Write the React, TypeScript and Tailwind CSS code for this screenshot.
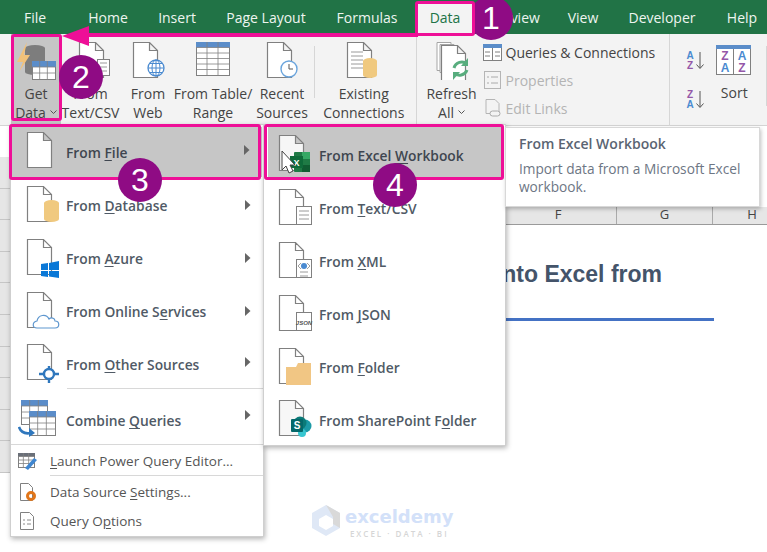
import React from "react";

const G = "#808080";
const Doc = ({ x = 0, y = 0, fill = "#fff" }: { x?: number; y?: number; fill?: string }) => (
  <path d={`M${x + 0.5} ${y + 0.5}h16l8 8v27h-24z M${x + 16.5} ${y + 0.5}v8h8`} fill={fill} stroke={G} strokeWidth="1.2" />
);
const Ic = ({ w = 40, h = 40, children }: { w?: number; h?: number; children: React.ReactNode }) => (
  <svg width={w} height={h} viewBox={`0 0 ${w} ${h}`} className="shrink-0 block">{children}</svg>
);
const Can = ({ x, y, w, h, c }: { x: number; y: number; w: number; h: number; c: string }) => (
  <g fill={c}>
    <ellipse cx={x + w / 2} cy={y + 3} rx={w / 2} ry={3} />
    <rect x={x} y={y + 3} width={w} height={h - 6} />
    <ellipse cx={x + w / 2} cy={y + h - 3} rx={w / 2} ry={3} />
  </g>
);
const Grid = ({ x, y, w, h, cols, rows, head = "#5b8dc9" }: { x: number; y: number; w: number; h: number; cols: number; rows: number; head?: string }) => (
  <g>
    <rect x={x + 0.5} y={y + 0.5} width={w} height={h} fill="#fff" stroke={G} />
    <rect x={x} y={y} width={w + 1} height={h / (rows + 1)} fill={head} />
    {Array.from({ length: cols - 1 }).map((_, i) => (
      <line key={i} x1={x + ((i + 1) * w) / cols} x2={x + ((i + 1) * w) / cols} y1={y} y2={y + h} stroke={G} strokeWidth="0.8" />
    ))}
    {Array.from({ length: rows }).map((_, i) => (
      <line key={i} x1={x} x2={x + w} y1={y + ((i + 1) * h) / (rows + 1)} y2={y + ((i + 1) * h) / (rows + 1)} stroke={G} strokeWidth="0.8" />
    ))}
  </g>
);
const Lines = ({ x, y, w, n = 3 }: { x: number; y: number; w: number; n?: number }) => (
  <g stroke="#9a9a9a" strokeWidth="1">
    {Array.from({ length: n }).map((_, i) => (
      <line key={i} x1={x} x2={x + w} y1={y + i * 4} y2={y + i * 4} />
    ))}
  </g>
);

const FileIcon = () => <Ic><Doc x={1} y={1} /></Ic>;
const DbIcon = () => <Ic><Doc x={1} y={1} /><Can x={18} y={15} w={15} h={22} c="#f0c97f" /></Ic>;
const AzureIcon = () => (
  <Ic><Doc x={1} y={1} />
    <path d="M15 26l7-1v7h-7zM23 25l10-2v9H23zM15 33h7v6l-7-1zM23 33h10v7l-10-1.5z" fill="#0a78d7" />
  </Ic>
);
const CloudIcon = () => (
  <Ic><Doc x={1} y={1} />
    <path d="M11 37c-5 0-5-6 0-7 1-6 9-8 12-2 2-2 6-1 6 2 5 0 5 7 0 7z" fill="#fff" stroke="#5f97cf" strokeWidth="1.2" />
  </Ic>
);
const NodeIcon = () => (
  <Ic><Doc x={1} y={1} />
    <circle cx="23" cy="31" r="5" fill="#fff" stroke="#2f77bd" strokeWidth="2.4" />
    <path d="M23 23v3M23 36v4M13 31h5M28 31h5" stroke="#2f77bd" strokeWidth="2.4" />
  </Ic>
);
const CombineIcon = () => (
  <Ic w={40} h={40}>
    <Grid x={3} y={1} w={26} h={24} cols={3} rows={3} />
    <Grid x={11} y={12} w={26} h={24} cols={3} rows={3} />
    <path d="M1 28c2 6 7 7 12 6" stroke="#2f77bd" strokeWidth="2.6" fill="none" />
    <path d="M11 29l6 5-6 4z" fill="#2f77bd" />
  </Ic>
);
const ExcelIcon = () => (
  <Ic><Doc x={1} y={1} fill="#f6f6f6" />
    <rect x="16" y="18" width="16" height="20" rx="1" fill="#1f7a45" />
    <rect x="24" y="18" width="8" height="7" fill="#36a865" />
    <rect x="24" y="31" width="8" height="7" fill="#105c32" />
    <rect x="12" y="22" width="13" height="12" fill="#0f6b3a" />
    <text x="18.5" y="31.5" fill="#fff" fontSize="9" fontWeight="700" textAnchor="middle" fontFamily="Liberation Sans">X</text>
  </Ic>
);
const TextDocIcon = () => (
  <Ic><Doc x={1} y={1} />
    <rect x="18.5" y="18.5" width="15" height="18" fill="#fff" stroke={G} />
    <Lines x={21} y={23} w={10} n={3} />
  </Ic>
);
const XmlIcon = () => (
  <Ic><Doc x={1} y={1} />
    <rect x="18.5" y="18.5" width="15" height="18" fill="#fff" stroke={G} />
    <circle cx="26" cy="25" r="3" fill="#4a8ad0" />
    <path d="M20 25l3-3M20 25l3 3M32 25l-3-3M32 25l-3 3" stroke="#888" strokeWidth="0.8" />
    <Lines x={22} y={31} w={8} n={2} />
  </Ic>
);
const JsonIcon = () => (
  <Ic><Doc x={1} y={1} />
    <rect x="18.5" y="18.5" width="15" height="18" fill="#fff" stroke={G} />
    <text x="26" y="31" fontSize="6" fontStyle="italic" fontFamily="Liberation Sans" fill="#555" textAnchor="middle">JSON</text>
  </Ic>
);
const FolderIcon = () => (
  <Ic><Doc x={1} y={1} />
    <path d="M8 20h25v18H8zM20 16h13v4H18z" fill="#f1c684" />
  </Ic>
);
const SharePointIcon = () => (
  <Ic><Doc x={1} y={1} fill="#f7f7f7" />
    <circle cx="27" cy="27" r="6.5" fill="#1c9aa6" />
    <circle cx="22" cy="24" r="6.5" fill="#0b7a78" />
    <circle cx="24" cy="34" r="4" fill="#37c6d0" />
    <rect x="13" y="20" width="12" height="13" rx="1" fill="#04686a" />
    <text x="19" y="30" fontSize="10" fontWeight="700" fill="#fff" textAnchor="middle" fontFamily="Liberation Sans">S</text>
  </Ic>
);

const Arrow = () => (
  <svg width="6" height="10" viewBox="0 0 6 10" className="absolute right-[12px] top-1/2 -translate-y-[7px]">
    <path d="M0 0l5.5 5L0 10z" fill="#666" />
  </svg>
);
const Label = ({ pre, u, post }: { pre: string; u: string; post: string }) => (
  <span className="whitespace-pre">{pre}<span className="underline underline-offset-2">{u}</span>{post}</span>
);

type Entry = { icon: React.ReactNode; pre: string; u: string; post: string };
const mainItems: Entry[] = [
  { icon: <DbIcon />, pre: "From ", u: "D", post: "atabase" },
  { icon: <AzureIcon />, pre: "From ", u: "A", post: "zure" },
  { icon: <CloudIcon />, pre: "From Online S", u: "e", post: "rvices" },
];
const subItems: Entry[] = [
  { icon: <TextDocIcon />, pre: "From ", u: "T", post: "ext/CSV" },
  { icon: <XmlIcon />, pre: "From ", u: "X", post: "ML" },
  { icon: <JsonIcon />, pre: "From ", u: "J", post: "SON" },
  { icon: <FolderIcon />, pre: "From ", u: "F", post: "older" },
];

const RBtn = ({ w, a, b, caret, icon, cls = "" }: { w: string; a: string; b: string; caret?: boolean; icon: React.ReactNode; cls?: string }) => (
  <div className={`${w} ${cls} flex flex-col items-center shrink-0`}>
    <div className="h-[50px] pt-[8px] flex justify-center">{icon}</div>
    <div className="leading-[19px] text-center whitespace-nowrap">{a}</div>
    <div className="leading-[19px] whitespace-nowrap flex items-center gap-[4px]">
      {b}
      {caret && (
        <svg width="7" height="5" viewBox="0 0 7 5"><path d="M.5 .5l3 3 3-3" fill="none" stroke="#555" /></svg>
      )}
    </div>
  </div>
);
const Pink = ({ cls }: { cls: string }) => <div className={`absolute border-[3px] border-[#ee0f97] rounded-[3px] ${cls}`} />;
const Num = ({ n, cls }: { n: string; cls: string }) => (
  <div className={`absolute w-[44px] h-[44px] rounded-full bg-[#8f0b84] text-white flex items-center justify-center text-[32px] font-['Liberation_Sans',sans-serif] ${cls}`}>{n}</div>
);

export default function App() {
  const tabs: [string, string][] = [
    ["File", "w-[64px]"], ["Home", "w-[82px]"], ["Insert", "w-[56px]"], ["Page Layout", "w-[122px]"],
    ["Formulas", "w-[80px]"],
  ];
  const tabsAfter: [string, string][] = [
    ["Review", "w-[82px]"], ["View", "w-[50px]"], ["Developer", "w-[108px]"], ["Help", "w-[52px]"],
  ];
  const rows = Array.from({ length: 10 });
  return (
    <div className="relative w-[767px] h-[552px] overflow-hidden bg-white text-[#444] text-[14px] font-['Open_Sans',sans-serif]">
      <div className="h-[34px] bg-[#217346] flex items-center pl-[3px] text-[#eef5f0]">
        {tabs.map(([t, w]) => (
          <div key={t} className={`${w} text-center shrink-0`}>{t}</div>
        ))}
        <div className="relative z-10 self-start ml-[8px] mt-[1px] w-[60px] h-[35px] border-[3px] border-[#ee0f97] rounded-[3px] bg-[#f3f3f3] flex items-center justify-center text-[#217346] pb-[2px] shrink-0">Data</div>
        <div className="w-[1px] shrink-0" />
        {tabsAfter.map(([t, w]) => (
          <div key={t} className={`${w} text-center shrink-0`}>{t}</div>
        ))}
      </div>

      <div className="h-[92px] bg-[#f3f3f3] border-b border-[#d4d4d4] flex pl-[11px]">
        <RBtn w="w-[50px]" a="Get" b="Data" caret cls="bg-[#c6c6c6]" icon={
          <Ic w={42} h={40}>
            <Can x={10} y={3} w={20} h={30} c="#7d7d7d" />
            <path d="M12 0L2 20h6L4 30 15 13H9z" fill="#f2c27a" />
            <Grid x={17} y={19} w={23} h={18} cols={3} rows={2} />
          </Ic>
        } />
        <RBtn w="w-[59px]" a="From" b="Text/CSV" icon={
          <Ic w={40} h={38}><Doc x={8} y={0} /><rect x="26.5" y="17.5" width="12" height="16" fill="#fff" stroke={G} /><Lines x={29} y={21} w={7} n={3} /></Ic>
        } />
        <RBtn w="w-[56px]" a="From" b="Web" icon={
          <Ic w={36} h={38}><Doc x={3} y={0} />
            <circle cx="26" cy="26" r="8" fill="#fff" stroke="#4a8ad0" strokeWidth="1.3" />
            <path d="M18 26h16M26 18v16M20 21.5h12M20 30.5h12" stroke="#4a8ad0" strokeWidth="1" />
            <ellipse cx="26" cy="26" rx="4" ry="8" fill="none" stroke="#4a8ad0" />
          </Ic>
        } />
        <RBtn w="w-[74px]" a="From Table/" b="Range" icon={<Ic w={36} h={36}><Grid x={1} y={0} w={33} h={33} cols={3} rows={5} /></Ic>} />
        <RBtn w="w-[64px]" a="Recent" b="Sources" icon={
          <Ic w={36} h={38}><Doc x={3} y={0} />
            <circle cx="25" cy="27" r="8" fill="#fff" stroke="#6aa4dc" strokeWidth="1.4" />
            <path d="M25 22v5h4" stroke="#555" fill="none" />
          </Ic>
        } />
        <div className="w-px h-[52px] mt-[12px] mr-[1px] bg-[#d6d6d6]" />
        <RBtn w="w-[96px]" a="Existing" b="Connections" icon={
          <Ic w={40} h={38}><Doc x={3} y={0} /><Lines x={7} y={10} w={12} n={5} /><Can x={19} y={16} w={14} h={20} c="#f0c97f" /></Ic>
        } />
        <div className="w-px h-[92px] ml-[4px] bg-[#d6d6d6]" />
        <RBtn w="w-[66px]" cls="ml-[2px]" a="Refresh" b="All" caret icon={
          <Ic w={38} h={38}>
            <path d="M4 .5h14v28H4z" fill="#fff" stroke="#a5a5a5" />
            <path d="M7 2.5h14v28H7z" fill="#fff" stroke="#a5a5a5" />
            <Doc x={8} y={3} />
            <path d="M21 26a8 8 0 0 1 13-4M34 28a8 8 0 0 1-13 3" stroke="#58ad7e" strokeWidth="3" fill="none" />
            <path d="M35 16v8h-7zM20 38v-8h7z" fill="#58ad7e" />
          </Ic>
        } />
        <div className="w-[186px] -ml-[2px] pt-[5px] shrink-0">
          <div className="h-[27px] flex items-center gap-[4px]">
            <Ic w={19} h={18}><rect x=".5" y=".5" width="18" height="16" fill="#fff" stroke={G} /><rect width="19" height="4" fill="#5b8dc9" /><path d="M9.5 4v13M2 8h5M2 12h5M12 8h5M12 12h5" stroke={G} /></Ic>
            <span>Queries &amp; Connections</span>
          </div>
          <div className="h-[28px] flex items-center gap-[4px] text-[#b4b4b4]">
            <Ic w={19} h={18}><rect x="1.5" y=".5" width="16" height="17" fill="#f3f3f3" stroke="#b5b5b5" /><path d="M4 6h2M8 6h7M4 12h2M8 12h7" stroke="#aaa" /></Ic>
            <span>Properties</span>
          </div>
          <div className="h-[28px] flex items-center gap-[4px] text-[#b4b4b4]">
            <Ic w={19} h={18}><path d="M3 .5h9l4 4v10H3z" fill="#f3f3f3" stroke="#b5b5b5" /><rect x="7" y="12" width="10" height="5" rx="2.5" fill="#f3f3f3" stroke="#aaa" /></Ic>
            <span>Edit Links</span>
          </div>
        </div>
        <div className="w-px h-[92px] bg-[#d6d6d6]" />
        <div className="w-[42px] flex flex-col items-center pt-[15px] gap-[17px] pl-[8px] shrink-0">
          <Ic w={20} h={22}>
            <text x="6" y="10" fontSize="10" fontWeight="700" fill="#4a8ad0" textAnchor="middle" fontFamily="Liberation Sans">A</text>
            <text x="6" y="20" fontSize="10" fontWeight="700" fill="#9457a8" textAnchor="middle" fontFamily="Liberation Sans">Z</text>
            <path d="M16 3v16M12.5 15.5l3.5 4 3.5-4" stroke="#555" fill="none" />
          </Ic>
          <Ic w={20} h={22}>
            <text x="6" y="10" fontSize="10" fontWeight="700" fill="#9457a8" textAnchor="middle" fontFamily="Liberation Sans">Z</text>
            <text x="6" y="20" fontSize="10" fontWeight="700" fill="#4a8ad0" textAnchor="middle" fontFamily="Liberation Sans">A</text>
            <path d="M16 3v16M12.5 15.5l3.5 4 3.5-4" stroke="#555" fill="none" />
          </Ic>
        </div>
        <div className="w-[46px] flex flex-col items-center shrink-0">
          <div className="pt-[11px] h-[49px]">
            <Ic w={36} h={32}>
              <rect x=".5" y=".5" width="34" height="29" fill="#fff" stroke={G} />
              <rect width="35" height="4" fill="#5b8dc9" />
              <path d="M17.5 4v26" stroke={G} />
              <g fontSize="12" fontWeight="700" textAnchor="middle" fontFamily="Liberation Sans">
                <text x="9" y="15" fill="#9457a8">Z</text><text x="9" y="27" fill="#4a8ad0">A</text>
                <text x="26" y="15" fill="#4a8ad0">A</text><text x="26" y="27" fill="#9457a8">Z</text>
              </g>
            </Ic>
          </div>
          <div className="leading-[19px]">Sort</div>
        </div>
        <div className="w-px h-[60px] mt-[12px] ml-[9px] bg-[#d6d6d6]" />
      </div>

      <div className="flex">
        <div className="w-[32px] shrink-0 pt-[31px] border-r border-[#9a9a9a]">
          {rows.map((_, i) => (
            <div key={i} className="h-[31.6px] bg-[#e6e6e6] border-b border-[#c6c6c6]" />
          ))}
        </div>
        <div className="flex-1 min-w-0">
          <div className="h-[81px]" />
          <div className="h-[18px] bg-[#e6e6e6] border-b border-[#9a9a9a] flex justify-end text-[13px] leading-[14px] text-[#444]">
            <div className="w-[117px] text-center border-r border-[#aaa]">F</div>
            <div className="w-[96px] text-center border-r border-[#aaa]">G</div>
            <div className="w-[54px] text-center pl-[24px]">H</div>
          </div>
          <div className="pl-[100px]">
            <div className="w-[530px] pt-[35px] text-right text-[23px] leading-[28px] font-bold text-[#44546a] font-['Liberation_Sans',sans-serif] whitespace-nowrap">
              Import Data into Excel from
            </div>
            <div className="ml-[300px] mt-[30px] w-[282px] h-[3px] bg-[#4472c4]" />
          </div>
        </div>
      </div>

      <div className="absolute left-[312px] top-[505px] flex items-start gap-[5px] font-['DejaVu_Sans',sans-serif]">
        <svg width="28" height="31" viewBox="0 0 28 31">
          <path d="M14 0l14 8v15l-14 8-14-8V8z" fill="#dfe8f6" />
          <path d="M14 0l14 8v15l-7-4V12z" fill="#d9d9d9" />
          <path d="M14 10l7 4v7l-7 4-7-4v-7z" fill="#fff" />
        </svg>
        <div className="flex flex-col items-center">
          <div className="text-[18px] leading-[24px] font-bold text-[#d3e1f9]">exceldemy</div>
          <div className="text-[8px] leading-[10px] tracking-[2px] text-[#d6d6d6] font-['Open_Sans',sans-serif] font-semibold">EXCEL · DATA · BI</div>
        </div>
      </div>

      {/* main menu */}
      <div className="absolute left-[10px] top-[124px] w-[254px] h-[413px] bg-white border border-[#cfcfcf] shadow-[1px_2px_5px_rgba(0,0,0,0.3)] pt-[2px] font-semibold text-[13.8px] text-[#505a66]">
        <div className="relative h-[50px] mb-[3px] mx-[1px] pt-[2px] pl-[14px] bg-[#c6c6c6] flex items-center text-[#3f4650]">
          <div className="w-[40px] -mt-[4px]"><FileIcon /></div>
          <Label pre="From " u="F" post="ile" />
          <Arrow />
        </div>
        {mainItems.map((m) => (
          <div key={m.u} className="relative h-[53px] pl-[15px] flex items-center">
            <div className="w-[40px] -mt-[4px]">{m.icon}</div>
            <Label pre={m.pre} u={m.u} post={m.post} />
            <Arrow />
          </div>
        ))}
        <div className="relative h-[49px] pt-[3px] pl-[15px] flex items-center">
          <div className="w-[40px] -mt-[4px]"><NodeIcon /></div>
          <Label pre="From " u="O" post="ther Sources" />
          <Arrow />
        </div>
        <div className="h-px ml-[56px] bg-[#d8d8d8]" />
        <div className="relative h-[55px] pt-[10px] pl-[7px] flex items-center">
          <div className="w-[48px] -mt-[6px]"><CombineIcon /></div>
          <Label pre="Combine " u="Q" post="ueries" />
          <Arrow />
        </div>
        <div className="h-px bg-[#d8d8d8]" />
        <div className="text-[13.5px] font-normal text-[#555]">
          <div className="h-[30px] pt-[2px] pl-[6px] flex items-center">
            <div className="w-[33px]">
              <Ic w={20} h={18}>
                <Grid x={1} y={1} w={16} h={14} cols={3} rows={3} head="#6a6f78" />
                <path d="M8 16l9-10 3 2-9 10z" fill="#3f86d0" />
              </Ic>
            </div>
            <Label pre="" u="L" post="aunch Power Query Editor..." />
          </div>
          <div className="h-px ml-[39px] bg-[#d8d8d8]" />
          <div className="h-[31px] pt-[1px] pl-[6px] flex items-center">
            <div className="w-[33px]">
              <Ic w={20} h={20}><path d="M3.5 1.5h8l4 4v13h-12z" fill="#fff" stroke={G} />
                <circle cx="14" cy="14" r="3.5" fill="none" stroke="#e1761a" strokeWidth="3" />
              </Ic>
            </div>
            <Label pre="Data Source " u="S" post="ettings..." />
          </div>
          <div className="h-[28px] pl-[6px] flex items-center">
            <div className="w-[33px]">
              <Ic w={20} h={20}><path d="M3.5 1.5h9l4 4v13h-13z" fill="#fff" stroke={G} />
                <path d="M6 9h2M10 9h4M6 13h2M10 13h4" stroke="#8a8a8a" />
              </Ic>
            </div>
            <Label pre="Query O" u="p" post="tions" />
          </div>
        </div>
      </div>

      {/* sub menu */}
      <div className="absolute left-[263px] top-[124px] w-[243px] h-[322px] bg-white border border-[#cfcfcf] shadow-[1px_2px_5px_rgba(0,0,0,0.3)] pt-[2px] font-semibold text-[13.8px] text-[#505a66]">
        <div className="h-[50px] mb-[6px] mx-[4px] pt-[8px] pl-[10px] bg-[#c6c6c6] flex items-center text-[#3f4650]">
          <div className="w-[41px] -mt-[4px]"><ExcelIcon /></div>
          <Label pre="From Excel " u="W" post="orkbook" />
        </div>
        {subItems.map((m) => (
          <div key={m.u} className="h-[53px] pl-[14px] flex items-center">
            <div className="w-[41px] -mt-[4px]">{m.icon}</div>
            <Label pre={m.pre} u={m.u} post={m.post} />
          </div>
        ))}
        <div className="h-[49px] pt-[3px] pl-[14px] flex items-center">
          <div className="w-[41px] -mt-[4px]"><SharePointIcon /></div>
          <Label pre="From SharePoint F" u="o" post="lder" />
        </div>
      </div>

      {/* tooltip */}
      <div className="absolute left-[505px] top-[127px] w-[255px] h-[80px] bg-white border border-[#d8d8d8] shadow-[1px_2px_4px_rgba(0,0,0,0.25)] pl-[13px] pt-[6px]">
        <div className="font-semibold text-[14px] leading-[20px] text-[#5a6472]">From Excel Workbook</div>
        <div className="mt-[6px] text-[13.7px] leading-[18px] text-[#6d7684]">Import data from a Microsoft Excel<br />workbook.</div>
      </div>

      {/* annotations */}
      <svg width="14" height="24" viewBox="0 0 14 24" className="absolute left-[281px] top-[150px]">
        <path d="M1 1v19l4-4 3 7 4-2-3-6h5z" fill="#fff" stroke="#444" strokeWidth="1" />
      </svg>
      <svg width="360" height="24" viewBox="0 0 360 24" className="absolute left-[60px] top-[25px]">
        <path d="M2 11L29 1v7h329v4H29v9z" fill="#ee0f97" />
      </svg>
      <Pink cls="left-[11px] top-[34px] w-[51px] h-[87px]" />
      <Pink cls="left-[9px] top-[124px] w-[252px] h-[56px]" />
      <Pink cls="left-[264px] top-[124px] w-[240px] h-[56px]" />
      <Num n="1" cls="left-[469px] top-[-4px]" />
      <Num n="2" cls="left-[59px] top-[55px]" />
      <Num n="3" cls="left-[118px] top-[158px]" />
      <Num n="4" cls="left-[373px] top-[163px]" />
    </div>
  );
}
